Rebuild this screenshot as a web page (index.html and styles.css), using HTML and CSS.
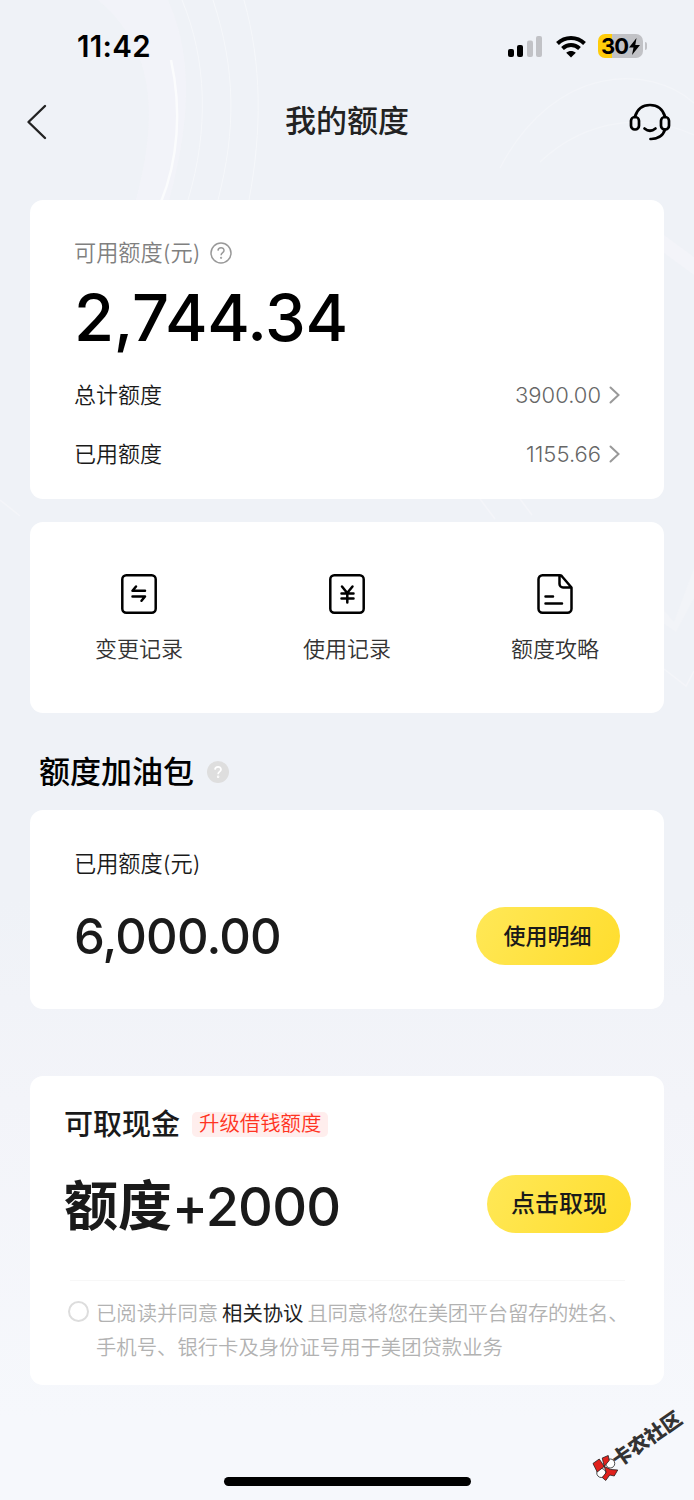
FILE: index.html
```html
<!DOCTYPE html>
<html lang="zh-CN">
<head>
<meta charset="utf-8">
<title>我的额度</title>
<link rel="stylesheet" href="styles.css">
</head>
<body>
<div class="screen">
  <svg class="backdrop" width="694" height="1500" viewBox="0 0 694 1500" fill="none">
    <path d="M98 0C170 60 150 150 132 215H165C190 130 195 60 168 0Z" fill="#f3f4f9" opacity=".7"/>
    <path d="M171 60C182 110 178 160 161 202" stroke="#fff" stroke-width="2.500" opacity=".7"/>
    <path d="M182 0C207 60 209 130 188 200M213 0C236 70 236 130 218 200M244 0C262 65 262 130 249 200" stroke="#f6f8fb" stroke-width="1"/>
    <path d="M500 168C555 63 650 64 694 103M540 162C590 115 650 115 694 135" stroke="#f3f5f9" stroke-width="1.200"/>
    <path d="M664 235l30 22v18l-30-22Z" fill="#f3f4f9"/>
    <path d="M664 610l10 12 20-54v30l-18 34-12-8Z" fill="#f2f4f8"/>
    <path d="M664 669l22 17 8-15M520 499l12 16M480 499l15 20M0 500l20 16" stroke="#f4f5f9" stroke-width="1.500"/>
  </svg>

  <header class="status">
    <span class="clock">11:42</span>
    <div class="indicators">
      <svg width="36" height="24" viewBox="0 0 36 24"><rect x="1" y="15" width="6" height="8" rx="2"/><rect x="10" y="11" width="6" height="12" rx="2"/><g fill="#c1c2c6"><rect x="20" y="6.500" width="6" height="16.500" rx="2"/><rect x="29" y="2" width="6" height="21" rx="2"/></g></svg>
      <svg class="wifi" width="30" height="24" viewBox="0 0 30 24" fill="none" stroke="#000" stroke-width="4"><path d="M1.500 9.500C9 2.200 21 2.200 28.500 9.500M6.500 14.500C11.500 9.900 18.500 9.900 23.500 14.500"/><path d="M15 23.500L10.200 18.700C13 16.300 17 16.300 19.800 18.700Z" fill="#000" stroke="none"/></svg>
      <div class="battery"><span>30</span><svg width="11" height="17" viewBox="0 0 11 17"><path d="M7.500 0L0 9.500h4.500L3 17 11 7H6.300Z"/></svg></div>
      <i class="battery-tip"></i>
    </div>
  </header>

  <nav class="navbar">
    <svg width="22" height="36" viewBox="0 0 22 36" fill="none" stroke="#222" stroke-width="2.400" stroke-linecap="round" stroke-linejoin="round"><path d="M20 2L3.500 18 20 34"/></svg>
    <h1>我的额度</h1>
    <svg width="42" height="38" viewBox="0 0 42 38" fill="none" stroke="#000" stroke-width="2.700" stroke-linecap="round"><rect x="2" y="14" width="8" height="12.500" rx="3.800"/><rect x="32" y="14" width="8" height="12.500" rx="3.800"/><path d="M5.800 14C8.500 5 14 2 21 2S33.500 5 36.200 14M36 26.500C34 33 28 36.200 21.500 36M15.500 25.500Q21 30 26.500 25.500"/></svg>
  </nav>

  <section class="card quota">
    <div class="label-row muted">可用额度(元)
      <svg width="22" height="22" viewBox="0 0 22 22" fill="none" stroke="#999" stroke-width="1.500"><circle cx="11" cy="11" r="10"/><path d="M8 8.600C8.200 4.700 14 4.900 14 8.400C14 10.700 11.100 10.500 11.100 13.200"/><circle cx="11.100" cy="15.800" r=".4"/></svg>
    </div>
    <div class="amount"><span>2,744.34</span></div>
    <div class="line"><span>总计额度</span><span class="value">3900.00<svg width="11" height="18" viewBox="0 0 11 18"><path d="M1.500 1.500L9.500 9l-8 7.500"/></svg></span></div>
    <div class="line"><span>已用额度</span><span class="value">1155.66<svg width="11" height="18" viewBox="0 0 11 18"><path d="M1.500 1.500L9.500 9l-8 7.500"/></svg></span></div>
  </section>

  <section class="card shortcuts">
    <div class="shortcut">
      <svg viewBox="0 0 36 40"><rect x="1.300" y="1.300" width="33.400" height="37.400" rx="4"/><path d="M24 16.700H11.500l3.500-4.200M11.500 22.500H24l-3.500 4.200"/></svg>
      <span>变更记录</span>
    </div>
    <div class="shortcut">
      <svg viewBox="0 0 36 40"><rect x="1.300" y="1.300" width="33.400" height="37.400" rx="4"/><path d="M13 12.500l5.200 6.500 5.300-6.500M12.500 19.500h12M12.500 24.500h12M18.300 19v9.500"/></svg>
      <span>使用记录</span>
    </div>
    <div class="shortcut">
      <svg viewBox="0 0 36 40"><path d="M23 1.300H5.500a4 4 0 0 0-4 4v29.400a4 4 0 0 0 4 4h25a4 4 0 0 0 4-4V13.500L25.500 3Q24.500 1.300 23 1.300M22.500 2v8a3.500 3.500 0 0 0 3.500 3.500h8M8.500 22.500H16M8.500 29.500H25"/></svg>
      <span>额度攻略</span>
    </div>
  </section>

  <h2>额度加油包
    <svg width="22" height="22" viewBox="0 0 22 22" fill="none" stroke="#fff" stroke-width="1.700"><circle cx="11" cy="11" r="11" fill="#dedede" stroke="none"/><path d="M8 8.600C8.200 4.900 14 5 14 8.400C14 10.700 11.100 10.500 11.100 13.200"/><circle cx="11.100" cy="15.800" r=".4"/></svg>
  </h2>

  <section class="card boost">
    <div class="label-row">已用额度(元)</div>
    <div class="action-row"><span class="boost-amount">6,000.00</span><button>使用明细</button></div>
  </section>

  <section class="card cash">
    <div class="cash-head"><strong>可取现金</strong><span class="tag">升级借钱额度</span></div>
    <div class="action-row"><span class="cash-amount"><b>额度</b>+2000</span><button class="withdraw">点击取现</button></div>
    <hr>
    <div class="agreement"><i class="radio"></i><p>已阅读并同意<a>相关协议</a><span class="terms">且同意将您在美团平台留存的姓名、</span><br>手机号、银行卡及身份证号用于美团贷款业务</p></div>
  </section>

  <div class="home-indicator"></div>

  <div class="watermark">
    <svg width="27" height="27" viewBox="0 0 27 27" stroke="#222" stroke-width=".8"><circle cx="18" cy="8.500" r="4.500" fill="#fff"/><circle cx="9" cy="18" r="4.500" fill="#fff"/><path d="M.7 8.500L7 4l5 7.500L5 17ZM10 3l6-2.500 1 5-5 6ZM12 11.500l6.500 3 7 .5-3.500 6-4.500-1-4 5.500-3.500-3 4-5Z" fill="#df211c"/></svg>
    <span>卡农社区</span>
  </div>
</div>
</body>
</html>
```
FILE: styles.css
```css
* { box-sizing: border-box; }

body {
  margin: 0;
  font-family: Inter, "Noto Sans CJK SC", sans-serif;
  color: #1a1a1a;
}

.screen {
  position: relative;
  isolation: isolate;
  width: 694px;
  height: 1500px;
  padding: 0 30px;
  overflow: hidden;
  display: flex;
  flex-direction: column;
  background: linear-gradient(#eff2f7 0, #eff2f7 900px, #f3f4f9 1100px, #f6f8fc 1420px);
}

.backdrop { position: absolute; inset: 0; z-index: -1; }

.status {
  height: 92px;
  flex: none;
  display: flex;
  justify-content: space-between;
  align-items: center;
  margin: 0 17px 0 47px;
}

.clock { font-size: 29.5px; font-weight: 600; color: #000; letter-spacing: 0.3px; }
.indicators { display: flex; align-items: center; }
.wifi { margin: 0 12px 0 13px; }

.battery {
  width: 45px;
  height: 24px;
  border-radius: 7px;
  display: flex;
  align-items: center;
  justify-content: center;
  gap: 1px;
  background: linear-gradient(90deg, #ffcc0a 14px, #c1c2c6 14px);
  font-size: 22px;
  font-weight: 700;
  color: #000;
  letter-spacing: -1px;
}

.battery-tip { width: 2px; height: 8px; margin-left: 2px; border-radius: 0 2px 2px 0; background: #c1c2c6; }

.navbar {
  height: 60px;
  flex: none;
  display: flex;
  align-items: center;
  justify-content: space-between;
  margin: 0 -7px 48px -5px;
}

h1 { margin: -2px 0 0 18px; font-size: 31px; line-height: 44px; font-weight: 500; color: #222; }

.card { flex: none; background: #fff; border-radius: 13px; }

.quota { height: 299px; padding: 36px 44px 0; margin-bottom: 23px; }
.label-row { display: flex; align-items: center; height: 34px; font-size: 22.2px; line-height: 34px; font-weight: 350; gap: 10px; }
.muted { height: 33px; color: #808080; }
.amount { height: 96px; line-height: 98px; font-size: 65px; font-weight: 500; color: #000; letter-spacing: -0.35px; }
.line { height: 59px; display: flex; align-items: center; justify-content: space-between; font-size: 22px; line-height: 34px; font-weight: 350; }
.value { display: flex; align-items: center; gap: 8px; font-weight: 300; color: #666; }
.value svg { fill: none; stroke: #999; stroke-width: 2; stroke-linecap: round; }

.shortcuts { height: 191px; padding: 52px 5px 0; margin-bottom: 35px; display: grid; grid-template-columns: repeat(3, 1fr); }
.shortcut { display: flex; flex-direction: column; align-items: center; font-size: 22px; line-height: 34px; font-weight: 350; color: #333; gap: 18px; }
.shortcut svg { width: 36px; height: 40px; fill: none; stroke: #000; stroke-width: 2.5; stroke-linecap: round; stroke-linejoin: round; }

h2 { flex: none; display: flex; align-items: center; gap: 13px; height: 48px; margin: 0 0 14px 9px; font-size: 31px; line-height: 48px; font-weight: 500; color: #000; }

.boost { height: 199px; padding: 37px 44px 0; margin-bottom: 67px; }
.action-row { display: flex; align-items: center; justify-content: space-between; height: 58px; }
.boost .action-row { margin-top: 26px; }
.boost-amount { font-size: 49px; font-weight: 500; line-height: 58px; letter-spacing: -0.8px; padding-top: 2px; }

button {
  flex: none;
  width: 144px;
  height: 58px;
  padding: 0 1px 1px 0;
  border: 0;
  border-radius: 29px;
  background: linear-gradient(120deg, #ffe857, #ffdd2d);
  font: 500 22px/34px Inter, "Noto Sans CJK SC", sans-serif;
  color: #1a1a1a;
}

.cash { height: 309px; padding: 25px 33px 0 34px; }
.cash-head { display: flex; align-items: center; gap: 12px; height: 46px; }
.cash-head strong { font-size: 29px; line-height: 46px; font-weight: 500; padding-top: 2px; }
.tag { height: 25px; padding: 0 7px; border-radius: 5px; background: #ffeeed; color: #ff3322; font-size: 20.4px; line-height: 24px; font-weight: 350; }
.cash .action-row { margin-top: 28px; }
.cash-amount { display: flex; align-items: center; height: 58px; padding-top: 6px; font-size: 54px; line-height: 58px; font-weight: 500; letter-spacing: -0.8px; }
.cash-amount b { font-weight: 700; letter-spacing: 0; }
.withdraw { padding: 0; font-size: 24px; }
.cash hr { height: 1px; margin: 47px 6px 16px; border: 0; background: #f7f7f7; }
.agreement { display: flex; gap: 7px; margin-left: 4px; }
.radio { flex: none; width: 21px; height: 21px; margin-top: 4px; border: 2px solid #ddd; border-radius: 50%; }
.agreement p { margin: 0; white-space: nowrap; font-size: 20.35px; line-height: 34px; font-weight: 350; color: #b2b2b2; }
.agreement a { margin: 0 4px; color: #222; font-weight: 400; }
.terms { letter-spacing: -0.3px; }

.home-indicator { width: 247px; height: 9px; flex: none; margin: 92px auto 0 194px; border-radius: 5px; background: #000; }

.watermark {
  position: absolute;
  left: 585px;
  top: 1431px;
  display: flex;
  align-items: center;
  transform: rotate(-35deg);
  font-size: 20px;
  line-height: 30px;
  font-weight: 900;
  white-space: nowrap;
  color: #333;
}
.watermark svg { flex: none; margin-right: -3px; transform: rotate(35deg); }
```
